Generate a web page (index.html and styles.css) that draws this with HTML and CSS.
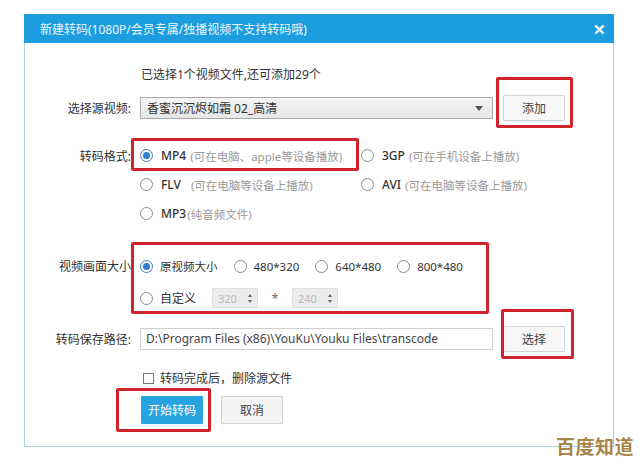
FILE: index.html
```html
<!DOCTYPE html>
<html lang="zh">
<head>
    <meta charset="UTF-8">
    <title>新建转码</title>
    <link rel="stylesheet" href="styles.css">
</head>
<body>
    <div class="dialog">
        <div class="titlebar">
            <span>新建转码(1080P/会员专属/独播视频不支持转码哦)</span>
            <span class="close">✕</span>
        </div>
        <div class="content">
            <div class="info">已选择1个视频文件,还可添加29个</div>

            <div class="row source-row">
                <label class="label">选择源视频:</label>
                <div class="select">
                    <span>香蜜沉沉烬如霜 02_高清</span>
                    <span class="arrow"></span>
                </div>
                <button class="btn">添加</button>
            </div>

            <div class="row format-row">
                <label class="label">转码格式:</label>
                <div class="options">
                    <div class="opt-line">
                        <span class="radio checked"></span><b>MP4</b><em>(可在电脑、apple等设备播放)</em>
                    </div>
                    <div class="opt-line col2">
                        <span class="radio"></span><b>3GP</b><em>(可在手机设备上播放)</em>
                    </div>
                </div>
            </div>
            <div class="row format-row">
                <span class="label"></span>
                <div class="options">
                    <div class="opt-line">
                        <span class="radio"></span><b>FLV</b><em class="wide">(可在电脑等设备上播放)</em>
                    </div>
                    <div class="opt-line col2">
                        <span class="radio"></span><b>AVI</b><em>(可在电脑等设备上播放)</em>
                    </div>
                </div>
            </div>
            <div class="row format-row">
                <span class="label"></span>
                <div class="options">
                    <div class="opt-line">
                        <span class="radio"></span><b>MP3</b><em class="tight">(纯音频文件)</em>
                    </div>
                </div>
            </div>

            <div class="row size-row first">
                <label class="label">视频画面大小</label>
                <div class="sizes">
                    <span class="size"><span class="radio checked"></span>原视频大小</span>
                    <span class="size"><span class="radio"></span>480*320</span>
                    <span class="size"><span class="radio"></span>640*480</span>
                    <span class="size"><span class="radio"></span>800*480</span>
                </div>
            </div>
            <div class="row size-row">
                <span class="label"></span>
                <div class="sizes">
                    <span class="size custom"><span class="radio"></span>自定义</span>
                    <span class="spin"><span>320</span><span class="spin-arrows"><i class="up"></i><i class="down"></i></span></span>
                    <span class="times">*</span>
                    <span class="spin"><span>240</span><span class="spin-arrows"><i class="up"></i><i class="down"></i></span></span>
                </div>
            </div>

            <div class="row path-row">
                <label class="label">转码保存路径:</label>
                <div class="path">D:\Program Files (x86)\YouKu\Youku Files\transcode</div>
                <button class="btn">选择</button>
            </div>

            <div class="row check-row">
                <span class="label"></span>
                <span class="checkbox"></span>
                <span>转码完成后，删除源文件</span>
            </div>

            <div class="row actions">
                <span class="label"></span>
                <button class="btn primary">开始转码</button>
                <button class="btn cancel">取消</button>
            </div>

            <!-- 标注框 -->
            <div class="mark mark-add"></div>
            <div class="mark mark-mp4"></div>
            <div class="mark mark-size"></div>
            <div class="mark mark-path"></div>
            <div class="mark mark-start"></div>
        </div>
    </div>
    <div class="watermark">百度知道</div>
</body>
</html>
```
FILE: styles.css
```css
:root {
    --blue: #1c9ddf;
    --mark: #d0232b;
    --text: #333;
    --grey: #9a9a9a;
}

* {
    box-sizing: border-box;
}

body {
    margin: 0;
    width: 640px;
    height: 468px;
    background: #fff;
    font-family: "Noto Sans", "Noto Sans CJK SC", sans-serif;
    font-size: 12px;
    color: var(--text);
    position: relative;
    overflow: hidden;
}

.dialog {
    margin: 14px 0 0 24px;
    width: 590px;
}

.titlebar {
    height: 29px;
    background: var(--blue);
    color: #eaf6fd;
    display: flex;
    align-items: center;
    justify-content: space-between;
    padding: 0 8px 0 16px;
    font-size: 12px;
}

.close {
    font-size: 15px;
    font-weight: 700;
    color: #fff;
}

.content {
    position: relative;
    height: 404px;
    border: 1px solid #a8d3dc;
    border-top: none;
    padding-top: 23px;
}

.info {
    padding-left: 116px;
    line-height: 18px;
}

.row {
    display: flex;
    align-items: center;
}

.label {
    width: 106px;
    text-align: right;
    flex-shrink: 0;
    margin-right: 9px;
    white-space: nowrap;
}

.source-row {
    margin-top: 11px;
    height: 26px;
}

.select {
    width: 353px;
    height: 22px;
    border: 1px solid #a9a9a9;
    background: linear-gradient(#f5f5f5, #e6e6e6);
    display: flex;
    align-items: center;
    justify-content: space-between;
    padding: 0 9px 0 6px;
}

.arrow {
    width: 0;
    height: 0;
    border-left: 4px solid transparent;
    border-right: 4px solid transparent;
    border-top: 5px solid #555;
}

.btn {
    font-family: inherit;
    font-size: 12px;
    color: #444;
    height: 26px;
    width: 62px;
    margin-left: 10px;
    border: 1px solid #d3d3d3;
    background: #f7f7f7;
    border-radius: 1px;
}

.format-row {
    height: 29px;
}

.format-row:nth-of-type(3) {
    margin-top: 20px;
}

.options {
    display: flex;
    align-items: center;
}

.opt-line {
    display: flex;
    align-items: center;
    width: 221px;
}

.opt-line b {
    font-weight: 500;
    color: #333;
    margin-right: 4px;
}

.opt-line em {
    font-style: normal;
    color: var(--grey);
    font-size: 11.5px;
}

.opt-line em.wide {
    margin-left: 6px;
}

.opt-line em.tight {
    margin-left: -3px;
}

.radio {
    width: 13px;
    height: 13px;
    border-radius: 50%;
    border: 1px solid #8a8a8a;
    background: #fff;
    margin-right: 8px;
    flex-shrink: 0;
    position: relative;
}

.radio.checked {
    border-color: #3a7fc8;
}

.radio.checked::after {
    content: '';
    position: absolute;
    left: 2px;
    top: 2px;
    width: 7px;
    height: 7px;
    border-radius: 50%;
    background: #2f7fd3;
}

.size-row {
    height: 32px;
}

.size-row.first {
    margin-top: 22px;
}

.sizes {
    display: flex;
    align-items: center;
}

.size {
    display: flex;
    align-items: center;
    margin-right: 16px;
    font-size: 11.5px;
}

.size .radio {
    margin-right: 7px;
}

.size.custom {
    margin-right: 16px;
    font-size: 12px;
}

.spin {
    width: 46px;
    height: 20px;
    background: #ececec;
    border: 1px solid #e0e0e0;
    color: #bbb;
    display: flex;
    align-items: center;
    justify-content: space-between;
    padding: 0 5px 0 5px;
    font-size: 11px;
}

.spin-arrows {
    display: flex;
    flex-direction: column;
    gap: 3px;
}

.spin-arrows i {
    width: 0;
    height: 0;
    border-left: 2.5px solid transparent;
    border-right: 2.5px solid transparent;
}

.spin-arrows .up {
    border-bottom: 3px solid #666;
}

.spin-arrows .down {
    border-top: 3px solid #666;
}

.times {
    width: 34px;
    text-align: center;
    color: #666;
}

.path-row {
    margin-top: 12px;
    height: 26px;
}

.path {
    width: 353px;
    height: 22px;
    border: 1px solid #cfcfcf;
    line-height: 20px;
    padding-left: 5px;
    color: #444;
    font-size: 12px;
}

.check-row {
    margin-top: 17px;
    height: 18px;
}

.checkbox {
    width: 11px;
    height: 11px;
    border: 1px solid #777;
    margin: 0 6px 0 3px;
}

.actions {
    margin-top: 9px;
    height: 28px;
}

.actions .btn {
    margin-left: 0;
    height: 28px;
}

.btn.primary {
    background: #27a3df;
    border-color: #27a3df;
    color: #fff;
    margin-left: 1px;
}

.btn.cancel {
    margin-left: 18px;
    background: #f4f4f4;
}

.mark {
    position: absolute;
    border: 3px solid var(--mark);
    border-radius: 2px;
}

.mark-add {
    left: 471px;
    top: 34px;
    width: 77px;
    height: 51px;
}

.mark-mp4 {
    left: 106px;
    top: 95px;
    width: 228px;
    height: 33px;
}

.mark-size {
    left: 106px;
    top: 199px;
    width: 358px;
    height: 72px;
}

.mark-path {
    left: 476px;
    top: 266px;
    width: 73px;
    height: 50px;
}

.mark-start {
    left: 91px;
    top: 345px;
    width: 95px;
    height: 44px;
}

.watermark {
    position: absolute;
    right: 6px;
    bottom: 9px;
    font-family: "Noto Sans CJK SC", sans-serif;
    font-weight: 700;
    font-size: 19px;
    letter-spacing: 0.5px;
    color: #a88548;
}
```
